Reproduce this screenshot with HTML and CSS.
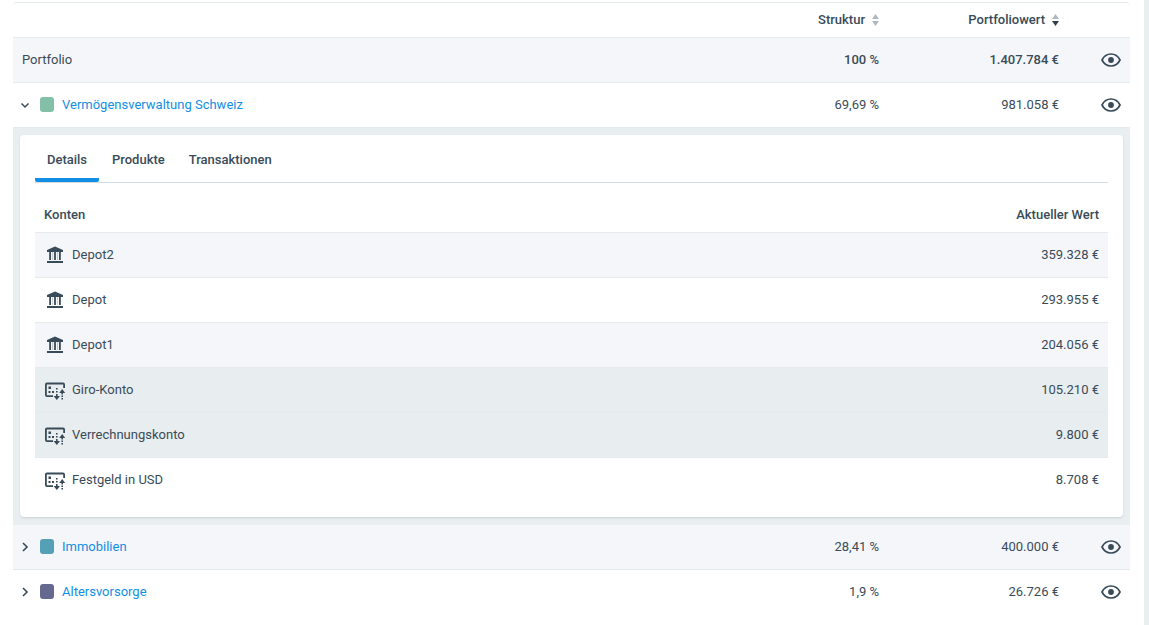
FILE: index.html
```
<!DOCTYPE html>
<html lang="de">
<head>
<meta charset="utf-8">
<title>Portfolio</title>
<link rel="stylesheet" href="styles.css">
</head>
<body>
<svg class="sprite" aria-hidden="true">
  <symbol id="eye" viewBox="0 0 20 14"><path d="M1 7C3 3 6.200 1 10 1s7 2 9 6c-2 4-5.200 6-9 6S3 11 1 7z" fill="none" stroke="currentColor" stroke-width="1.700"/><circle cx="10" cy="7" r="2.900" fill="currentColor"/></symbol>
  <symbol id="bank" viewBox="0 0 20 20"><path d="M10 1.500L18 5v2H2V5zM4.200 7h1.800v8H4.200zM9.100 7h1.800v8H9.100zM14 7h1.800v8H14zM2 16h16v2H2z" fill="currentColor"/><path d="M7.300 7h.8v8h-.8zM12.100 7h.8v8h-.8z" fill="currentColor" opacity=".35"/></symbol>
  <symbol id="account" viewBox="0 0 20 20"><path d="M8 16.100H2q-1.100 0-1.100-1.100V4.600q0-1.100 1.100-1.100h16q1.100 0 1.100 1.100V8" fill="none" stroke="currentColor" stroke-width="1.800"/><path d="M3.500 6.500h2.500v2.500H3.500zM3.500 11h2v2h-2zM7 11h2v2H7zM11 8h1.600v1.600H11zM11 11h1.600v1.600H11zM11 14h1.600v2h2.400L11.800 20 8.600 16H11zM17.200 9l3 4h-2.200v1.500h-1.600V13h-2.200zM16.400 15.500h1.600v1.500h-1.600zM16.400 18h1.600v1.600h-1.600z" fill="currentColor"/></symbol>
  <symbol id="down" viewBox="0 0 10 10"><path d="M1.500 3.500L5 7l3.500-3.500" fill="none" stroke="currentColor" stroke-width="1.500"/></symbol>
  <symbol id="right" viewBox="0 0 10 10"><path d="M3 1l4 4-4 4" fill="none" stroke="currentColor" stroke-width="1.600"/></symbol>
</svg>
<main class="page">
<table class="table overview">
  <colgroup><col><col class="col-value"><col class="col-value"><col class="col-action"></colgroup>
  <thead>
    <tr>
      <th></th>
      <th class="num"><button class="sort">Struktur <svg viewBox="0 0 7 12"><path class="idle" d="M3.500 0L7 5H0z"/><path class="idle" d="M3.500 12L7 7H0z"/></svg></button></th>
      <th class="num"><button class="sort">Portfoliowert <svg viewBox="0 0 7 12"><path class="idle" d="M3.500 0L7 5H0z"/><path class="active" d="M3.500 12L7 7H0z"/></svg></button></th>
      <th></th>
    </tr>
  </thead>
  <tbody>
    <tr class="alt">
      <td>Portfolio</td><td class="num strong">100 %</td><td class="num strong">1.407.784 €</td>
      <td><button class="icon-button view" aria-label="Portfolio anzeigen"><svg class="eye"><use href="#eye"/></svg></button></td>
    </tr>
    <tr class="open">
      <td><div class="name"><button class="icon-button" aria-label="Zuklappen"><svg class="chevron"><use href="#down"/></svg></button><span class="swatch green"></span><a href="#schweiz">Vermögensverwaltung Schweiz</a></div></td>
      <td class="num">69,69 %</td><td class="num">981.058 €</td>
      <td><button class="icon-button view" aria-label="Vermögensverwaltung Schweiz anzeigen"><svg class="eye"><use href="#eye"/></svg></button></td>
    </tr>
    <tr>
      <td class="panel" colspan="4">
        <section class="card">
          <div class="tabs" role="tablist">
            <button class="tab selected" role="tab" aria-selected="true">Details</button>
            <button class="tab" role="tab" aria-selected="false">Produkte</button>
            <button class="tab" role="tab" aria-selected="false">Transaktionen</button>
          </div>
          <table class="table accounts">
            <thead><tr><th>Konten</th><th class="num">Aktueller Wert</th></tr></thead>
            <tbody>
              <tr class="alt"><td><div class="account"><svg class="kind"><use href="#bank"/></svg>Depot2</div></td><td class="num">359.328 €</td></tr>
              <tr><td><div class="account"><svg class="kind"><use href="#bank"/></svg>Depot</div></td><td class="num">293.955 €</td></tr>
              <tr class="alt"><td><div class="account"><svg class="kind"><use href="#bank"/></svg>Depot1</div></td><td class="num">204.056 €</td></tr>
              <tr class="marked"><td><div class="account"><svg class="kind"><use href="#account"/></svg>Giro-Konto</div></td><td class="num">105.210 €</td></tr>
              <tr class="marked"><td><div class="account"><svg class="kind"><use href="#account"/></svg>Verrechnungskonto</div></td><td class="num">9.800 €</td></tr>
              <tr class="last"><td><div class="account"><svg class="kind"><use href="#account"/></svg>Festgeld in USD</div></td><td class="num">8.708 €</td></tr>
            </tbody>
          </table>
        </section>
      </td>
    </tr>
    <tr class="alt">
      <td><div class="name"><button class="icon-button" aria-label="Aufklappen"><svg class="chevron"><use href="#right"/></svg></button><span class="swatch teal"></span><a href="#immobilien">Immobilien</a></div></td>
      <td class="num">28,41 %</td><td class="num">400.000 €</td>
      <td><button class="icon-button view" aria-label="Immobilien anzeigen"><svg class="eye"><use href="#eye"/></svg></button></td>
    </tr>
    <tr class="last">
      <td><div class="name"><button class="icon-button" aria-label="Aufklappen"><svg class="chevron"><use href="#right"/></svg></button><span class="swatch violet"></span><a href="#altersvorsorge">Altersvorsorge</a></div></td>
      <td class="num">1,9 %</td><td class="num">26.726 €</td>
      <td><button class="icon-button view" aria-label="Altersvorsorge anzeigen"><svg class="eye"><use href="#eye"/></svg></button></td>
    </tr>
  </tbody>
</table>
</main>
</body>
</html>
```

FILE: styles.css
```
* { box-sizing: border-box; }
body {
  margin: 0;
  background: #e9eef1;
  color: #394b58;
  font: 13px/20px Roboto, sans-serif;
}
.sprite { display: none; }
.page {
  min-height: 100vh;
  margin-right: 5px;
  padding: 2px 14px 0 13px;
  background: #fff;
}
button {
  padding: 0;
  border: 0;
  background: none;
  color: inherit;
  font: inherit;
  cursor: pointer;
}
a { color: #118fe4; text-decoration: none; }
.table {
  width: 100%;
  border-spacing: 0;
}
.overview {
  table-layout: fixed;
  border-top: 1px solid #e4eaed;
  border-radius: 4px;
}
.col-value { width: 180px; }
.col-action { width: 62px; }
th, td {
  height: 45px;
  padding: 0 9px;
  border-bottom: 1px solid #e4eaed;
  text-align: left;
}
th { height: 35px; font-weight: 500; }
.num { text-align: right; }
.strong { font-weight: 500; }
.alt { background: #f5f6fa; }
.marked { background: #e8edef; }
.last > td { border-bottom-color: transparent; }
.sort { display: inline-flex; align-items: center; gap: 7px; }
.sort svg { width: 7px; height: 12px; }
.idle { fill: #afb8bd; }
.active { fill: #2f414d; }
.icon-button { display: flex; }
.view { margin-left: auto; }
.eye { width: 20px; height: 14px; }
.name { display: flex; align-items: center; }
.chevron { width: 10px; height: 10px; margin-left: -2px; }
.swatch {
  width: 14px;
  height: 15px;
  margin: 0 8px 1px 10px;
  border-radius: 3px;
}
.green { background: #82c0a9; }
.teal { background: #56a0b7; }
.violet { background: #66698f; }
.panel {
  padding: 7px 7px 8px;
  border: 0;
  background: #e9eef1;
}
.card {
  padding: 0 15px 14px;
  border-radius: 4px;
  background: #fff;
  box-shadow: 0 1px 2px #c9d0d4;
}
.tabs {
  display: flex;
  gap: 2px;
  height: 48px;
  margin-bottom: 15px;
  border-bottom: 1px solid #d5dde1;
}
.tab {
  min-width: 64px;
  padding: 2px 11px 0;
  border-radius: 2px;
  font-weight: 500;
}
.selected { background: linear-gradient(#118fe4, #118fe4) bottom / 100% 4px no-repeat; }
.account { display: flex; align-items: center; gap: 6px; }
.kind { width: 22px; height: 20px; }
```
